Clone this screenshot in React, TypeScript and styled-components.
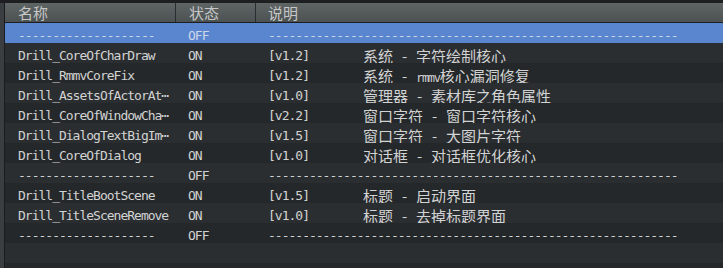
import React from "react";
import styled, { createGlobalStyle } from "styled-components";

const Global = createGlobalStyle`
  html, body { margin: 0; padding: 0; background: #26292b; }
  body { overflow: hidden; }
`;

const MONO = `"DejaVu Sans Mono", "Noto Sans CJK SC", monospace`;
const CJK = `"Noto Sans CJK SC", "DejaVu Sans", sans-serif`;

const Frame = styled.div`
  display: flex;
  height: 100vh;
  border-top: 3px solid #1d1f21;
  box-sizing: border-box;
`;

const Gutter = styled.div`
  width: 4px;
  flex: none;
  background: #3b3e41;
`;

const Table = styled.div`
  flex: 1;
  display: flex;
  flex-direction: column;
  border-left: 1px solid #1a1c1e;
`;

const Header = styled.div`
  display: grid;
  grid-template-columns: 171px 80px 1fr;
  height: 19px;
  flex: none;
  border-bottom: 1px solid #1c1e20;
  background: linear-gradient(#5f6464, #4c5151);
`;

const HeadCell = styled.div<{ $last?: boolean }>`
  box-sizing: border-box;
  padding-left: ${(p) => (p.$last ? 12 : 13)}px;
  border-right: ${(p) => (p.$last ? "none" : "1px solid #2a2d2f")};
  font-family: ${CJK};
  font-size: 15px;
  line-height: 19px;
  color: #c6c8c8;
  white-space: nowrap;
`;

const Row = styled.div<{ $selected?: boolean; $alt?: boolean }>`
  display: grid;
  grid-template-columns: 171px 80px 95px 1fr;
  height: 20px;
  flex: none;
  background: ${(p) => (p.$selected ? "#5a86d0" : p.$alt ? "#2b2e31" : "#25282a")};
  color: ${(p) => (p.$selected ? "#cdd6e8" : "#d2d3d3")};
`;

const Filler = styled.div`
  flex: 1;
  min-height: 0;
  background: #25282a;
`;

const MonoCell = styled.div<{ $pad: number; $span?: boolean }>`
  padding: 3px 0 0 ${(p) => p.$pad}px;
  grid-column: ${(p) => (p.$span ? "3 / 5" : "auto")};
  font-family: ${MONO};
  font-size: 13px;
  letter-spacing: -1px;
  line-height: 20px;
  white-space: nowrap;
`;

const DescCell = styled.div`
  padding: 3px 0 0 12px;
  font-family: ${CJK};
  font-size: 15px;
  line-height: 20px;
  white-space: nowrap;
`;

const Latin = styled.span`
  font-family: "DejaVu Sans Mono", monospace;
  font-size: 12px;
  letter-spacing: -1.3px;
`;

const Sep = styled.span`
  display: inline-block;
  width: 23px;
  text-align: center;
`;

type Item =
  | { sep: true }
  | { sep?: false; name: string; ver: string; cat: string; detail: string };

const items: Item[] = [
  { sep: true },
  { name: "Drill_CoreOfCharDraw", ver: "[v1.2]", cat: "系统", detail: "字符绘制核心" },
  { name: "Drill_RmmvCoreFix", ver: "[v1.2]", cat: "系统", detail: "rmmv核心漏洞修复" },
  { name: "Drill_AssetsOfActorAt⋯", ver: "[v1.0]", cat: "管理器", detail: "素材库之角色属性" },
  { name: "Drill_CoreOfWindowCha⋯", ver: "[v2.2]", cat: "窗口字符", detail: "窗口字符核心" },
  { name: "Drill_DialogTextBigIm⋯", ver: "[v1.5]", cat: "窗口字符", detail: "大图片字符" },
  { name: "Drill_CoreOfDialog", ver: "[v1.0]", cat: "对话框", detail: "对话框优化核心" },
  { sep: true },
  { name: "Drill_TitleBootScene", ver: "[v1.5]", cat: "标题", detail: "启动界面" },
  { name: "Drill_TitleSceneRemove", ver: "[v1.0]", cat: "标题", detail: "去掉标题界面" },
  { sep: true },
];

function renderDetail(text: string) {
  return text
    .split(/([A-Za-z]+)/)
    .filter(Boolean)
    .map((part, i) =>
      /^[A-Za-z]+$/.test(part) ? <Latin key={i}>{part}</Latin> : <span key={i}>{part}</span>
    );
}

export default function App() {
  return (
    <>
      <Global />
      <Frame>
        <Gutter />
        <Table>
          <Header>
            <HeadCell>名称</HeadCell>
            <HeadCell>状态</HeadCell>
            <HeadCell $last>说明</HeadCell>
          </Header>
          {items.map((it, i) =>
            it.sep ? (
              <Row key={i} $selected={i === 0} $alt={i % 2 === 1}>
                <MonoCell $pad={13}>{"-".repeat(20)}</MonoCell>
                <MonoCell $pad={12}>OFF</MonoCell>
                <MonoCell $pad={12} $span>
                  {"-".repeat(60)}
                </MonoCell>
              </Row>
            ) : (
              <Row key={i} $alt={i % 2 === 1}>
                <MonoCell $pad={13}>{it.name}</MonoCell>
                <MonoCell $pad={12}>ON</MonoCell>
                <MonoCell $pad={12}>{it.ver}</MonoCell>
                <DescCell>
                  <span>{it.cat}</span>
                  <Sep>-</Sep>
                  {renderDetail(it.detail)}
                </DescCell>
              </Row>
            )
          )}
          <Row $alt />
          <Filler />
        </Table>
      </Frame>
    </>
  );
}
